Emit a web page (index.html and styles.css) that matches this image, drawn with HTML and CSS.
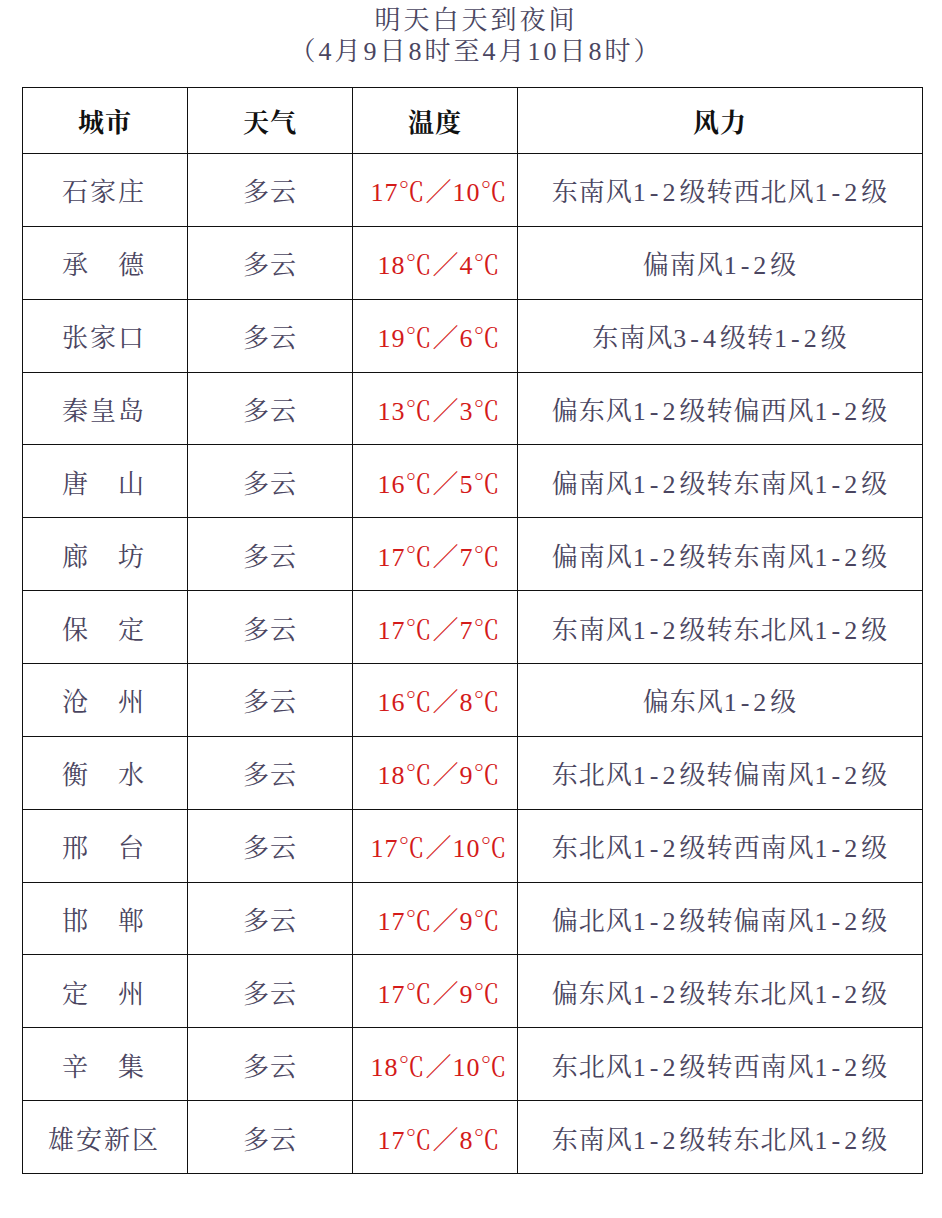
FILE: index.html
```html
<!DOCTYPE html>
<html lang="zh-CN">
<head>
<meta charset="utf-8">
<title>明天白天到夜间</title>
<link rel="stylesheet" href="styles.css">
</head>
<body>
<div class="page">
  <div class="title">
    <div class="title-line">明天白天到夜间</div>
    <div class="title-line">（4月9日8时至4月10日8时）</div>
  </div>
  <table class="weather">
    <colgroup>
      <col class="c-city"><col class="c-wx"><col class="c-temp"><col class="c-wind">
    </colgroup>
    <thead>
      <tr><th>城市</th><th>天气</th><th>温度</th><th>风力</th></tr>
    </thead>
    <tbody>
      <tr><td class="city">石家庄</td><td>多云</td><td class="temp">17℃／10℃</td><td class="wind">东南风<span class="lv">1-2</span>级转西北风<span class="lv">1-2</span>级</td></tr>
      <tr><td class="city">承　德</td><td>多云</td><td class="temp">18℃／4℃</td><td class="wind">偏南风<span class="lv">1-2</span>级</td></tr>
      <tr><td class="city">张家口</td><td>多云</td><td class="temp">19℃／6℃</td><td class="wind">东南风<span class="lv">3-4</span>级转<span class="lv">1-2</span>级</td></tr>
      <tr><td class="city">秦皇岛</td><td>多云</td><td class="temp">13℃／3℃</td><td class="wind">偏东风<span class="lv">1-2</span>级转偏西风<span class="lv">1-2</span>级</td></tr>
      <tr><td class="city">唐　山</td><td>多云</td><td class="temp">16℃／5℃</td><td class="wind">偏南风<span class="lv">1-2</span>级转东南风<span class="lv">1-2</span>级</td></tr>
      <tr><td class="city">廊　坊</td><td>多云</td><td class="temp">17℃／7℃</td><td class="wind">偏南风<span class="lv">1-2</span>级转东南风<span class="lv">1-2</span>级</td></tr>
      <tr><td class="city">保　定</td><td>多云</td><td class="temp">17℃／7℃</td><td class="wind">东南风<span class="lv">1-2</span>级转东北风<span class="lv">1-2</span>级</td></tr>
      <tr><td class="city">沧　州</td><td>多云</td><td class="temp">16℃／8℃</td><td class="wind">偏东风<span class="lv">1-2</span>级</td></tr>
      <tr><td class="city">衡　水</td><td>多云</td><td class="temp">18℃／9℃</td><td class="wind">东北风<span class="lv">1-2</span>级转偏南风<span class="lv">1-2</span>级</td></tr>
      <tr><td class="city">邢　台</td><td>多云</td><td class="temp">17℃／10℃</td><td class="wind">东北风<span class="lv">1-2</span>级转西南风<span class="lv">1-2</span>级</td></tr>
      <tr><td class="city">邯　郸</td><td>多云</td><td class="temp">17℃／9℃</td><td class="wind">偏北风<span class="lv">1-2</span>级转偏南风<span class="lv">1-2</span>级</td></tr>
      <tr><td class="city">定　州</td><td>多云</td><td class="temp">17℃／9℃</td><td class="wind">偏东风<span class="lv">1-2</span>级转东北风<span class="lv">1-2</span>级</td></tr>
      <tr><td class="city">辛　集</td><td>多云</td><td class="temp">18℃／10℃</td><td class="wind">东北风<span class="lv">1-2</span>级转西南风<span class="lv">1-2</span>级</td></tr>
      <tr><td class="city">雄安新区</td><td>多云</td><td class="temp">17℃／8℃</td><td class="wind">东南风<span class="lv">1-2</span>级转东北风<span class="lv">1-2</span>级</td></tr>
    </tbody>
  </table>
</div>
</body>
</html>
```

FILE: styles.css
```css
html, body {
  margin: 0;
  padding: 0;
  background: #ffffff;
}

.page {
  padding: 5px 0 0 22px;
  font-family: "Liberation Serif", "Noto Serif CJK SC", "Noto Sans CJK SC", serif;
  color: #4a4560;
}

.title {
  width: 900px;
  text-align: center;
  font-size: 26px;
  line-height: 31px;
  letter-spacing: 3px;
  margin-bottom: 20px;
  padding-left: 4px;
}

.weather {
  border-collapse: collapse;
  table-layout: fixed;
  width: 901px;
}

.c-city, .c-wx, .c-temp { width: 165px; }
.c-wind { width: 405px; }

.weather th,
.weather td {
  border: 1px solid #111111;
  text-align: center;
  vertical-align: middle;
  padding: 0;
  font-size: 26px;
  letter-spacing: 1px;
  white-space: nowrap;
}

.weather th {
  height: 65px;
  color: #111111;
  font-weight: bold;
}

.weather td {
  height: 71.86px;
  color: #4a4560;
}

.weather td.city {
  letter-spacing: 2px;
  padding-right: 2px;
}

.weather td.temp {
  color: #d41a1a;
  padding-left: 8px;
}

.weather td.wind .lv {
  letter-spacing: 4px;
}
```
